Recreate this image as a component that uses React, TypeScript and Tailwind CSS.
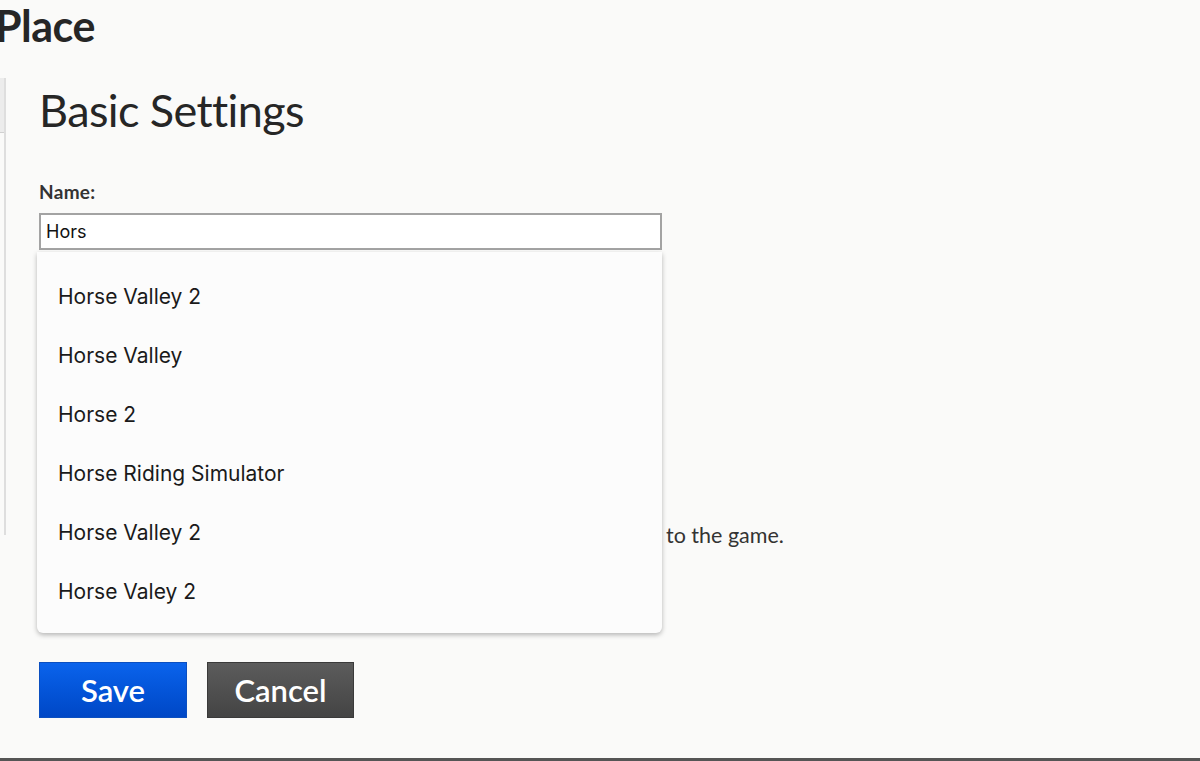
import { useState } from "react";

const suggestions = [
  "Horse Valley 2",
  "Horse Valley",
  "Horse 2",
  "Horse Riding Simulator",
  "Horse Valley 2",
  "Horse Valey 2",
];

const pageFont = { fontFamily: '"Lato", "Noto Sans", sans-serif' };
const listFont = { fontFamily: '"Inter", "Liberation Sans", sans-serif' };

export default function App() {
  const [name, setName] = useState("Hors");

  return (
    <div
      className="flex min-h-[761px] flex-col overflow-hidden bg-[#fafaf9] text-[#222]"
      style={pageFont}
    >
      <h1 className="-ml-[5px] h-[78px] pt-[3px] text-[43px] font-bold leading-[46px] tracking-[-0.5px] text-[#262626]">
        Place
      </h1>

      <div className="flex flex-1">
        <aside className="flex h-[457px] w-[6px] flex-col border-r-2 border-[#dedede]">
          <div className="h-[55px] border-b border-[#d0d0d0] bg-[#ececec]" />
        </aside>

        <main className="flex flex-1 flex-col pl-[33px]">
          <h2 className="mt-[6px] text-[45px] font-normal leading-[52px] tracking-[-0.6px] text-[#262626]">
            Basic Settings
          </h2>

          <label className="mt-[44px] text-[19px] font-bold leading-[24px] tracking-[0.3px] text-[#333]">
            Name:
          </label>

          <div className="relative mt-[9px] w-[623px]">
            <input
              value={name}
              onChange={(event) => setName(event.target.value)}
              className="h-[37px] w-full border-2 border-[#a3a3a3] bg-white px-[5px] text-[18px] text-[#111] caret-black outline-none"
              style={listFont}
              autoFocus
            />

            <ul
              className="absolute left-[-2px] top-[39px] z-10 w-[625px] rounded-b-[6px] bg-[#fcfcfc] pb-[12px] pt-[15px] shadow-[0_2px_5px_rgba(0,0,0,0.28)]"
              style={listFont}
            >
              {suggestions.map((item, index) => (
                <li
                  key={index}
                  className="flex h-[59px] items-center px-[21px] text-[21px] text-[#1a1a1a]"
                >
                  {item}
                </li>
              ))}
            </ul>
          </div>

          {/* the start of this line sits under the suggestion list */}
          <div className="mt-[273px] flex h-[48px] text-[21.5px] leading-[24px] text-[#333]">
            <span className="w-[627px] shrink-0" />
            <span>to the game.</span>
          </div>

          <div className="mt-[91px] flex gap-[20px]">
            <button
              type="button"
              className="h-[56px] w-[148px] border border-[#0b4fc0] bg-gradient-to-b from-[#0b63ec] to-[#0047c6] text-[31px] font-semibold leading-[50px] text-white"
            >
              Save
            </button>
            <button
              type="button"
              className="h-[56px] w-[147px] border border-[#3a3a3a] bg-gradient-to-b from-[#5c5c5c] to-[#444444] text-[31px] font-semibold leading-[50px] text-white"
            >
              Cancel
            </button>
          </div>
        </main>
      </div>

      <div className="h-[3px] bg-[#555]" />
    </div>
  );
}
